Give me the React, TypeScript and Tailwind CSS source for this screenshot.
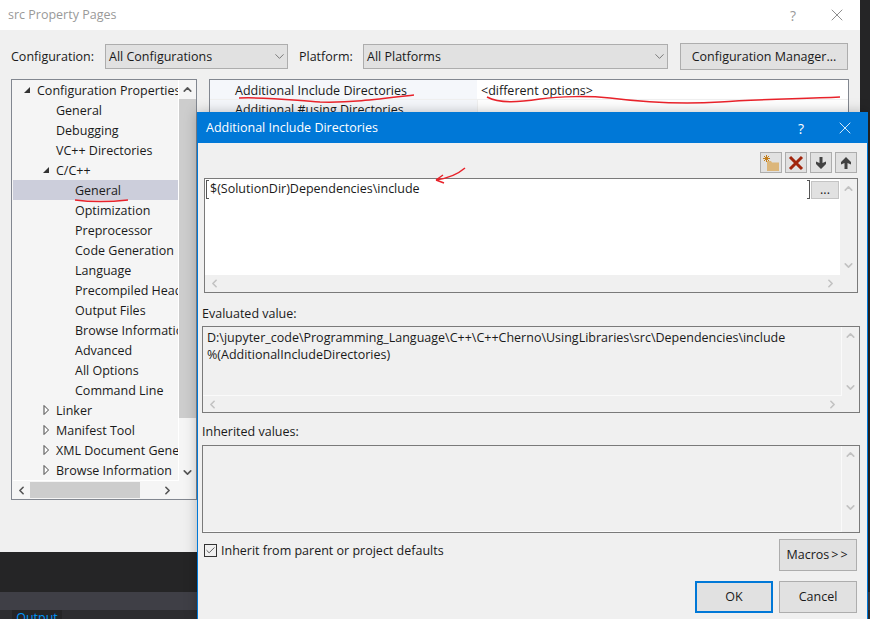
import React from 'react';
import { ChevronDown, ChevronUp, ChevronLeft, ChevronRight, X, Check } from 'lucide-react';

const treeRows = [
  { label: 'Configuration Properties', pad: 'pl-[24px]', arrow: 'open' },
  { label: 'General', pad: 'pl-[43px]' },
  { label: 'Debugging', pad: 'pl-[43px]' },
  { label: 'VC++ Directories', pad: 'pl-[43px]' },
  { label: 'C/C++', pad: 'pl-[43px]', arrow: 'open' },
  { label: 'General', pad: 'pl-[62px]', selected: true },
  { label: 'Optimization', pad: 'pl-[62px]' },
  { label: 'Preprocessor', pad: 'pl-[62px]' },
  { label: 'Code Generation', pad: 'pl-[62px]' },
  { label: 'Language', pad: 'pl-[62px]' },
  { label: 'Precompiled Headers', pad: 'pl-[62px]' },
  { label: 'Output Files', pad: 'pl-[62px]' },
  { label: 'Browse Information', pad: 'pl-[62px]' },
  { label: 'Advanced', pad: 'pl-[62px]' },
  { label: 'All Options', pad: 'pl-[62px]' },
  { label: 'Command Line', pad: 'pl-[62px]' },
  { label: 'Linker', pad: 'pl-[43px]', arrow: 'closed' },
  { label: 'Manifest Tool', pad: 'pl-[43px]', arrow: 'closed' },
  { label: 'XML Document Generator', pad: 'pl-[43px]', arrow: 'closed' },
  { label: 'Browse Information', pad: 'pl-[43px]', arrow: 'closed' },
];

const TreeArrow: React.FC<{ open: boolean; pad: string }> = ({ open, pad }) => {
  const x = pad === 'pl-[24px]' ? 'left-[9px]' : 'left-[28px]';
  return (
    <svg width="10" height="10" viewBox="0 0 10 10" className={`absolute top-[5px] ${x}`}>
      {open ? (
        <path d="M8 2 L8 8 L2 8 Z" fill="#333" />
      ) : (
        <path d="M3 0.5 L7.5 5 L3 9.5 Z" fill="#fff" stroke="#444" strokeWidth="1" />
      )}
    </svg>
  );
};

const Select: React.FC<{ label: string; width: string }> = ({ label, width }) => (
  <div className={`${width} h-[25px] flex items-center justify-between pl-[3px] bg-[#e1e1e1] border border-[#adadad]`}>
    <span className="pt-[2px]">{label}</span>
    <ChevronDown size={15} strokeWidth={1.2} className="text-[#555]" />
  </div>
);

const ToolButton: React.FC<{ children: React.ReactNode }> = ({ children }) => (
  <div className="w-[22px] h-[21px] flex items-center justify-center bg-[#e1e1e1] border border-[#adadad]">{children}</div>
);

const DialogButton: React.FC<{ children: React.ReactNode; primary?: boolean }> = ({ children, primary }) => (
  <div className={`w-[78px] h-[32px] flex items-center justify-center bg-[#e1e1e1] ${primary ? 'border-2 border-[#0078d7]' : 'border border-[#adadad]'}`}>
    {children}
  </div>
);

// read-only box with the grey scrollbars on its right and bottom edges
const ScrollBox: React.FC<{ height: string; horizontal?: boolean; children?: React.ReactNode }> = ({ height, horizontal, children }) => (
  <div className={`${height} relative border border-[#7a7a7a] flex`}>
    <div className="flex-1 flex flex-col min-w-0">
      <div className="flex-1 min-h-0 px-[4px] pt-[2px] leading-[17px] border-r border-b border-[#fafafa]">{children}</div>
      {horizontal && (
        <div className="h-[16px] flex items-center justify-between pr-[3px] pl-[3px] text-[#c2c2c2]">
          <ChevronLeft size={13} strokeWidth={3} />
          <ChevronRight size={13} strokeWidth={3} />
        </div>
      )}
    </div>
    <div className="w-[17px] flex flex-col justify-between items-center pt-[2px] pb-[18px] text-[#c2c2c2]">
      <ChevronUp size={13} strokeWidth={3} />
      <ChevronDown size={13} strokeWidth={3} />
    </div>
  </div>
);

const App: React.FC = () => {
  return (
    <div className="relative w-[870px] h-[619px] overflow-hidden bg-[#252526] text-[12.5px] text-[#1a1a1a] font-['Open_Sans','Noto_Sans',sans-serif]">
      {/* Property pages window behind the dialog */}
      <div className="w-[860px] h-[552px] bg-[#f0f0f0]">
        <div className="h-[30px] bg-white flex items-center justify-between pl-[8px] pr-[13px] text-[#999999]">
          <span>src Property Pages</span>
          <div className="flex items-center gap-[31px]">
            <span className="text-[14px]">?</span>
            <X size={20} strokeWidth={1} className="text-[#777]" />
          </div>
        </div>

        <div className="flex items-center h-[27px] mt-[13px] pl-[11px]">
          <span className="w-[94px] pt-[2px]">Configuration:</span>
          <Select label="All Configurations" width="w-[183px]" />
          <span className="w-[64px] ml-[11px] pt-[2px]">Platform:</span>
          <Select label="All Platforms" width="w-[305px]" />
          <div className="w-[168px] h-[27px] ml-[12px] pt-[2px] flex items-center justify-center bg-[#e1e1e1] border border-[#adadad]">
            Configuration Manager...
          </div>
        </div>

        <div className="flex mt-[9px] pl-[11px]">
          {/* Category tree */}
          <div className="w-[186px] h-[421px] flex flex-col border border-[#828790] bg-[#f5f5f5]">
            <div className="flex h-[402px]">
              <div className="w-[166px] ml-[1px] h-[401px] overflow-hidden border-r border-b border-white">
                {treeRows.map((row, i) => (
                  <div
                    key={i}
                    className={`relative h-[20px] leading-[22px] whitespace-nowrap ${row.pad} ${row.selected ? 'bg-[#cccedb]' : ''}`}
                  >
                    {row.arrow && <TreeArrow open={row.arrow === 'open'} pad={row.pad} />}
                    {row.label}
                  </div>
                ))}
              </div>
              <div className="w-[17px] flex flex-col items-center text-[#555]">
                <ChevronUp size={13} strokeWidth={3} className="my-[3px]" />
                <div className="w-full h-[319px] bg-[#cdcdcd]" />
                <ChevronDown size={13} strokeWidth={3} className="mt-auto mb-[3px]" />
              </div>
            </div>
            <div className="h-[16px] flex items-center text-[#555] pl-[3px] pr-[22px]">
              <ChevronLeft size={13} strokeWidth={3} />
              <div className="w-[110px] h-full ml-[2px] bg-[#cdcdcd]" />
              <ChevronRight size={13} strokeWidth={3} className="ml-auto" />
            </div>
          </div>

          {/* Property grid */}
          <div className="w-[640px] h-[421px] ml-[12px] border border-[#828790] bg-white">
            <div className="flex h-[19px] leading-[22px]">
              <div className="w-[267px] pl-[25px] bg-[#f5f7fb]">Additional Include Directories</div>
              <div className="flex-1 pl-[4px]">&lt;different options&gt;</div>
            </div>
            <div className="flex h-[20px] leading-[20px] border-t border-[#f0f0f0]">
              <div className="w-[267px] pl-[25px] bg-[#f5f7fb]">Additional #using Directories</div>
              <div className="flex-1 border-l border-[#f0f0f0]" />
            </div>
          </div>
        </div>
      </div>

      {/* Bottom of the IDE */}
      <div className="h-[40px]" />
      <div className="h-[18px] bg-[#3f3f46]" />
      <div className="h-[9px] bg-[#2d2d30] pl-[12px]">
        <div className="w-[50px] h-[9px] bg-[#252526] text-center text-[#0097fb] leading-[15px] overflow-hidden">Output</div>
      </div>

      {/* Additional Include Directories dialog */}
      <div className="absolute left-[197px] top-[112px] w-[671px] h-[507px] bg-[#f0f0f0] border border-[#0078d7] border-b-0 shadow-[0_0_12px_rgba(0,0,0,0.25)] flex flex-col">
        <div className="h-[30px] shrink-0 bg-[#0078d7] text-white flex items-center justify-between pl-[8px] pr-[12px]">
          <span>Additional Include Directories</span>
          <div className="flex items-center gap-[31px]">
            <span className="text-[14px]">?</span>
            <X size={20} strokeWidth={1} />
          </div>
        </div>

        <div className="flex justify-end gap-[3px] mt-[9px] pr-[10px]">
          <ToolButton>
            <svg width="18" height="18" viewBox="0 0 18 18">
              <path d="M5 7 H9 L10 8.5 H17 V17 H5 Z" fill="#dcb67a" />
              <path d="M4.5 1 V8 M1 4.5 H8 M2 2 L7 7 M7 2 L2 7" stroke="#c27d1a" strokeWidth="1" />
            </svg>
          </ToolButton>
          <ToolButton>
            <svg width="16" height="16" viewBox="0 0 16 16">
              <path d="M2 2 L14 14 M14 2 L2 14" stroke="#a1260d" strokeWidth="3" />
            </svg>
          </ToolButton>
          <ToolButton>
            <svg width="12" height="14" viewBox="0 0 12 14">
              <path d="M4.5 1 H7.5 V7 L11 5.5 V8 L6 13 L1 8 V5.5 L4.5 7 Z" fill="#424242" />
            </svg>
          </ToolButton>
          <ToolButton>
            <svg width="12" height="14" viewBox="0 0 12 14">
              <path d="M4.5 13 H7.5 V7 L11 8.5 V6 L6 1 L1 6 V8.5 L4.5 7 Z" fill="#424242" />
            </svg>
          </ToolButton>
        </div>

        {/* Editable list */}
        <div className="relative mt-[5px] ml-[6px] mr-[9px] h-[115px] border border-[#7a7a7a] flex">
          <div className="flex-1 flex flex-col">
            <div className="flex-1 bg-white flex items-start">
              <div className="relative flex-1 h-[19px] mt-[1px] ml-[1px] mr-[1px] pl-[3px] leading-[18px] border-l border-r border-[#555] whitespace-nowrap">
                <span className="absolute left-0 top-0 w-[2px] h-px bg-[#555]" />
                <span className="absolute left-0 bottom-0 w-[2px] h-px bg-[#555]" />
                <span className="absolute right-0 top-0 w-[2px] h-px bg-[#555]" />
                <span className="absolute right-0 bottom-0 w-[2px] h-px bg-[#555]" />
                $(SolutionDir)Dependencies\include
              </div>
              <div className="w-[28px] h-[18px] mt-[2px] mr-[1px] bg-[#e1e1e1] border border-[#c4c4c4] flex items-center justify-center leading-[12px]">
                ...
              </div>
            </div>
            <div className="h-[17px] flex items-center justify-between px-[3px] text-[#c2c2c2]">
              <ChevronLeft size={13} strokeWidth={3} />
              <ChevronRight size={13} strokeWidth={3} />
            </div>
          </div>
          <div className="w-[17px] flex flex-col justify-between items-center pt-[3px] pb-[20px] text-[#c2c2c2]">
            <ChevronUp size={13} strokeWidth={3} />
            <ChevronDown size={13} strokeWidth={3} />
          </div>
        </div>

        <div className="ml-[4px] mt-[11px] leading-[20px] h-[18px]">Evaluated value:</div>
        <div className="mt-[4px] ml-[4px] mr-[7px]">
          <ScrollBox height="h-[87px]" horizontal>
            <div className="whitespace-nowrap">D:\jupyter_code\Programming_Language\C++\C++Cherno\UsingLibraries\src\Dependencies\include</div>
            <div>%(AdditionalIncludeDirectories)</div>
          </ScrollBox>
        </div>

        <div className="ml-[4px] mt-[9px] leading-[20px] h-[18px]">Inherited values:</div>
        <div className="mt-[5px] ml-[4px] mr-[7px]">
          <ScrollBox height="h-[88px]" />
        </div>

        <div className="flex items-start justify-between mt-[6px] ml-[6px] mr-[10px]">
          <div className="flex items-center gap-[4px] mt-[2px] h-[18px]">
            <div className="w-[13px] h-[13px] border border-[#333] bg-[#f0f0f0] flex items-center justify-center">
              <Check size={11} strokeWidth={1.5} />
            </div>
            <span className="pt-[2px]">Inherit from parent or project defaults</span>
          </div>
          <DialogButton>
            Macros<span className="tracking-[2px] ml-[2px]">&gt;&gt;</span>
          </DialogButton>
        </div>

        <div className="flex justify-end gap-[6px] mt-[10px] mr-[10px]">
          <DialogButton primary>OK</DialogButton>
          <DialogButton>Cancel</DialogButton>
        </div>
      </div>

      {/* Red pen marks over the screenshot */}
      <svg width="870" height="619" viewBox="0 0 870 619" fill="none" className="absolute left-0 top-0 pointer-events-none">
        <path d="M239 98 C270 97 290 100 320 102 C350 103 380 99 414 95" stroke="#e8222a" strokeWidth="1.5" />
        <path d="M487 97 C500 104 520 102 540 99 C560 96 590 96 610 98 C650 103 690 104 720 102 C760 99 800 99 840 97" stroke="#e8222a" strokeWidth="1.5" />
        <path d="M75 200 C90 202 110 202 128 200" stroke="#e8222a" strokeWidth="1.5" />
        <path d="M465 168 C458 174 450 178 436 180 M436 180 L443 175 M436 180 L444 183" stroke="#e8222a" strokeWidth="1.5" />
      </svg>
    </div>
  );
};

export default App;
